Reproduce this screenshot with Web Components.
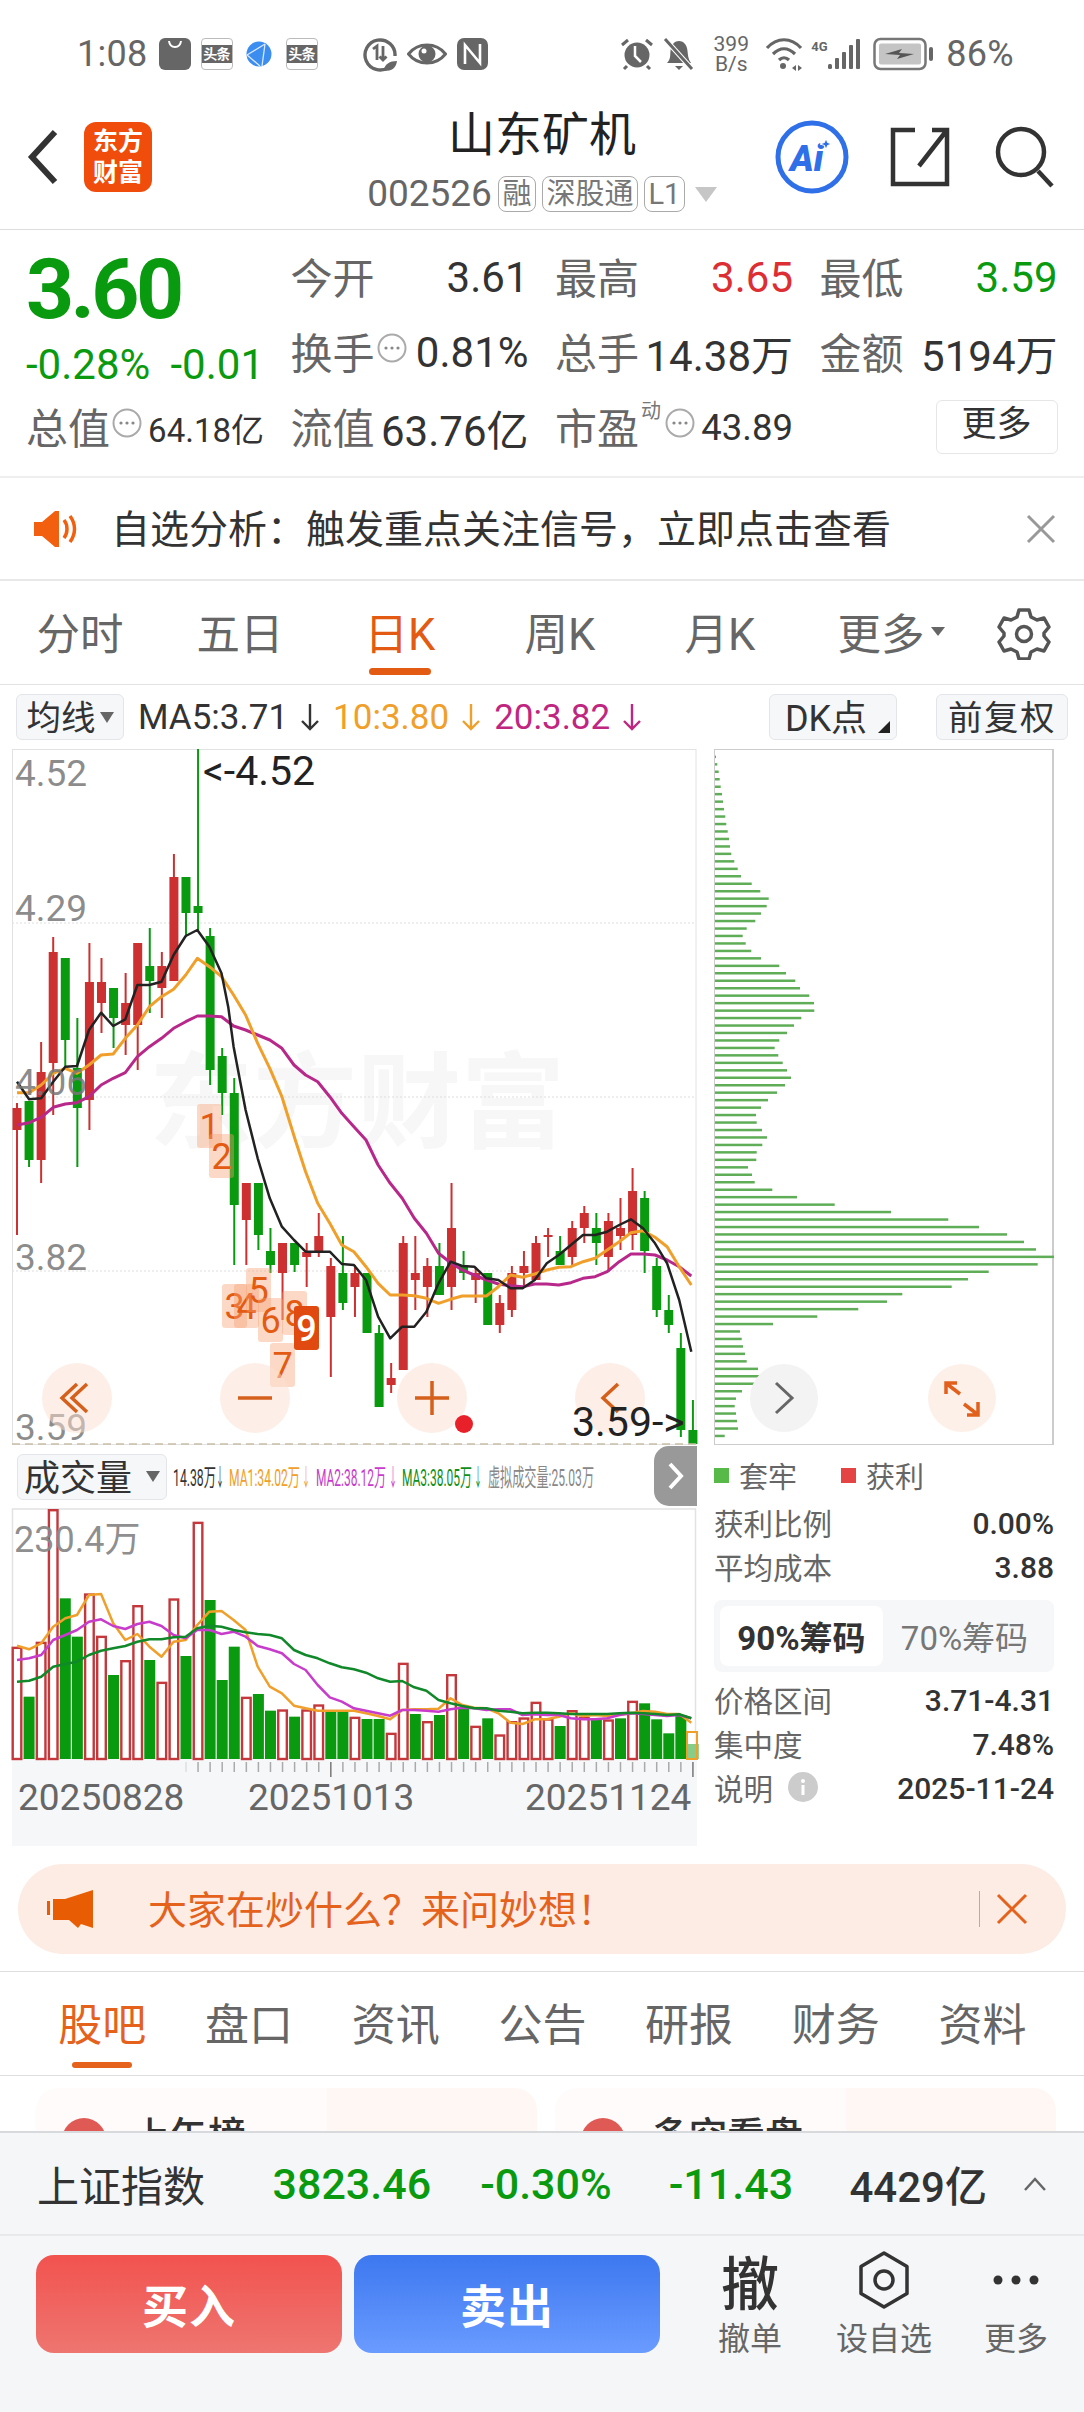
<!DOCTYPE html>
<html lang="zh-CN">
<head>
<meta charset="utf-8">
<title>山东矿机</title>
<style>
  html, body { margin: 0; background: #fff; }
  body { width: 1084px; height: 2412px; overflow: hidden; color: #333; font-family: Roboto, "Noto Sans CJK SC", sans-serif; }
  .boards { display: flex; }
</style>
</head>
<body>
<status-bar></status-bar>
<stock-header></stock-header>
<quote-panel></quote-panel>
<notice-bar></notice-bar>
<period-tabs></period-tabs>
<kline-toolbar></kline-toolbar>
<div class="boards">
  <kline-board></kline-board>
  <chip-board></chip-board>
</div>
<ask-banner></ask-banner>
<section-tabs></section-tabs>
<feed-cards></feed-cards>
<market-dock></market-dock>

<script>
const GREEN = '#0a9a10', RED = '#cc3030';
const PITCH = 12.07;
const barX = i => 17 + PITCH * i;
// readings from the two chart segments: x is in 2.23x units, y is offset from the segment top
const upper = pts => pts.map(([x, y]) => [x / 2.235, 680 + y / 3]);
const lower = pts => pts.map(([x, y]) => [x / 2.235, 1140 + y / 3]);
const vol = pts => pts.map(([x, y]) => [x / 2.235, 1440 + y / 3]);
const polyline = (pts, color, w) => `<polyline fill="none" stroke="${color}" stroke-width="${w}" stroke-linejoin="round" points="${pts.map(p => p[0].toFixed(1) + ',' + p[1].toFixed(1)).join(' ')}"/>`;
const downArrow = color => `<svg width="20" height="28" viewBox="0 0 20 28" style="flex:none"><path d="M10 1v25M2 18l8 8 8-8" fill="none" stroke="${color}" stroke-width="2.400"/></svg>`;

class StatusBar extends HTMLElement {
    connectedCallback() {
        const toutiao = `<span class="tt"><b>头条</b></span>`;
        this.attachShadow({ mode: 'open' }).innerHTML = `
        <style>
          :host { display: flex; align-items: center; height: 85px; padding: 22px 70px 0 77px; box-sizing: border-box; color: #666; }
          .time, .pct { font-size: 36px; letter-spacing: .3px; }
          svg { display: block; flex: none; }
          .tt { flex: none; width: 32px; height: 32px; box-sizing: border-box; border: 1px solid #bbb; border-radius: 4px; display: flex; align-items: center; justify-content: center; background: #fff; }
          .tt b { display: block; width: 100%; background: #666; color: #fff; font-size: 14px; line-height: 18px; text-align: center; font-weight: 700; white-space: nowrap; letter-spacing: -.5px; }
          .gap { flex: 1; }
          .rate { font-size: 21px; line-height: 20px; width: 38px; text-align: center; margin: 0 15px 0 17px; }
          .rate span { display: block; white-space: nowrap; }
          .g4 { font-size: 13px; font-weight: 700; margin: -14px 0 0 8px; width: 18px; }
        </style>
        <span class="time">1:08</span>
        <svg width="32" height="32" style="margin-left:11px"><rect width="32" height="32" rx="6" fill="#666"/><path d="M10 3c1 8 11 8 12 0" fill="none" stroke="#fff" stroke-width="2"/></svg>
        <span style="margin-left:10px;display:flex">${toutiao}</span>
        <svg width="26" height="26" viewBox="0 0 26 26" style="margin-left:13px"><circle cx="13" cy="13" r="12.5" fill="#3b8df0"/><path d="M1 14 19 3M1 14l13 11M19 3l-3 22" stroke="#dbeafe" stroke-width="1.3" fill="none"/></svg>
        <span style="margin-left:14px;display:flex">${toutiao}</span>
        <svg width="36" height="36" viewBox="0 0 36 36" style="margin-left:44px"><path d="M27 31A15 15 0 1 1 33 20" fill="none" stroke="#666" stroke-width="3.4"/><path d="M11 13l4-3v14M21 10v14m-3.500-3.500 3.500 3.500 3.500-3.500" fill="none" stroke="#666" stroke-width="2.800"/><path d="M22 35c0-7 6-10 13-10-1 7-5 10-13 10z" fill="#666"/></svg>
        <svg width="40" height="28" viewBox="0 0 40 28" style="margin-left:9px"><path d="M1.500 14C11 2 29 2 38.500 14 29 26 11 26 1.500 14z" fill="#fff" stroke="#666" stroke-width="3"/><circle cx="20" cy="14" r="8.500" fill="#666"/><circle cx="17" cy="11" r="2.500" fill="#fff"/></svg>
        <svg width="31" height="32" viewBox="0 0 31 32" style="margin-left:10px"><rect width="31" height="32" rx="7" fill="#666"/><path d="M8 26V7l15 18V6" fill="none" stroke="#fff" stroke-width="2.600"/></svg>
        <span class="gap"></span>
        <svg width="34" height="34" viewBox="0 0 34 34"><circle cx="17" cy="18" r="12.500" fill="#666"/><path d="M15 9v10l6 6" fill="none" stroke="#fff" stroke-width="2.500"/><path d="M2 8l6-5M32 8l-6-5M7 29l-3 3M27 29l3 3" stroke="#666" stroke-width="3"/></svg>
        <svg width="32" height="34" viewBox="0 0 32 34" style="margin-left:9px"><path d="M4 26c4-4 3-8 3.500-12C8 7 12 4 16 4s8 3 8.500 10c.5 4 .5 8 3.500 12z" fill="#666"/><path d="M12 29h8l-4 4z" fill="#666"/><path d="M2 2l27 30" stroke="#fff" stroke-width="5"/><path d="M2 2l27 30" stroke="#666" stroke-width="3"/></svg>
        <div class="rate"><span>399</span><span>B/s</span></div>
        <svg width="38" height="34" viewBox="0 0 38 34"><path d="M2 11c10-11 24-11 34 0M8 17c7-7 15-7 22 0M14 23c3-3 7-3 10 0" fill="none" stroke="#666" stroke-width="3.200"/><circle cx="18" cy="29" r="3" fill="#666"/><path d="M27 31l4-3v6zM37 31l-4-3v6z" fill="#666"/></svg>
        <span class="g4">4G</span>
        <svg width="34" height="32" viewBox="0 0 34 32" style="margin-left:-1px"><g fill="#666"><rect x="0" y="26" width="4" height="5" rx="1.500"/><rect x="7" y="20" width="4" height="11" rx="1"/><rect x="14" y="14" width="4" height="17" rx="1"/><rect x="21" y="7" width="4" height="24" rx="1"/><rect x="28" y="1" width="4" height="30" rx="1"/></g></svg>
        <svg width="62" height="34" viewBox="0 0 62 34" style="margin-left:11px"><rect x="1.500" y="2" width="51" height="30" rx="6" fill="#fff" stroke="#777" stroke-width="2.500"/><rect x="6" y="6.500" width="42" height="21" rx="2" fill="#c4c4c4"/><path d="M12 17l17-5-3 4 15 1-17 5 3-4z" fill="#555"/><rect x="56" y="10" width="4" height="14" rx="2" fill="#666"/></svg>
        <span class="pct" style="margin-left:11px">86%</span>`;
    }
}
customElements.define('status-bar', StatusBar);

class StockHeader extends HTMLElement {
    connectedCallback() {
        this.attachShadow({ mode: 'open' }).innerHTML = `
        <style>
          :host { display: grid; grid-template-columns: 1fr auto 1fr; align-items: center; height: 145px; box-sizing: border-box; border-bottom: 1px solid #ddd; }
          .left, .right { display: flex; align-items: center; }
          .left { padding-left: 27px; gap: 25px; }
          .right { justify-content: flex-end; padding-right: 28px; }
          .logo { width: 68px; height: 70px; border-radius: 12px; background: #f04c0c; color: #fff; font-weight: 700; font-size: 25px; line-height: 31px; text-align: center; display: flex; align-items: center; justify-content: center; }
          .mid { text-align: center; margin-left: 0; }
          .name { font-size: 47px; line-height: 60px; color: #222; padding-top: 6px; }
          .sub { display: flex; align-items: center; gap: 6px; color: #666; font-size: 37px; line-height: 42px; margin-top: 8px; }
          .tag { border: 1.500px solid #aaa; border-radius: 8px; font-size: 29px; line-height: 34px; padding: 0 3.500px; color: #777; }
          .tri { width: 0; height: 0; border: 11px solid transparent; border-top: 15px solid #c6c6c6; border-bottom: 0; margin-left: 4px; }
        </style>
        <div class="left">
          <svg width="32" height="56" viewBox="0 0 32 56"><path d="M28 3 5 28l23 25" fill="none" stroke="#333" stroke-width="6"/></svg>
          <div class="logo"><div>东方<br>财富</div></div>
        </div>
        <div class="mid">
          <div class="name">山东矿机</div>
          <div class="sub"><span>002526</span><span class="tag">融</span><span class="tag">深股通</span><span class="tag">L1</span><i class="tri"></i></div>
        </div>
        <div class="right">
          <svg width="74" height="74" viewBox="0 0 74 74"><circle cx="37" cy="37" r="34" fill="none" stroke="#2f6fe8" stroke-width="5"/><text x="15" y="51" font-family="Roboto" font-weight="900" font-style="italic" font-size="36" fill="#2f6fe8">Ai</text><path d="M51 18l1.500 4.500 4.500 1.500-4.500 1.500-1.500 4.500-1.500-4.500-4.500-1.500 4.500-1.500z" fill="#2f6fe8" stroke="#fff" stroke-width="1"/></svg>
          <svg width="62" height="62" viewBox="0 0 62 62" style="margin-left:40px"><path d="M26 4H4v54h54V30M58 30V4H43M58 4 30 40" fill="none" stroke="#333" stroke-width="4.500"/></svg>
          <svg width="62" height="62" viewBox="0 0 62 62" style="margin-left:43px"><circle cx="27" cy="26" r="23" fill="none" stroke="#333" stroke-width="4.500"/><path d="M44 45l14 15" stroke="#333" stroke-width="4.500"/></svg>
        </div>`;
    }
}
customElements.define('stock-header', StockHeader);

class QuotePanel extends HTMLElement {
    connectedCallback() {
        const dots = `<svg class="dots" width="30" height="30" viewBox="0 0 30 30"><circle cx="15" cy="15" r="13.500" fill="none" stroke="#aaa" stroke-width="2"/><circle cx="9" cy="15" r="1.600" fill="#888"/><circle cx="15" cy="15" r="1.600" fill="#888"/><circle cx="21" cy="15" r="1.600" fill="#888"/></svg>`;
        this.attachShadow({ mode: 'open' }).innerHTML = `
        <style>
          :host { display: grid; grid-template-columns: repeat(4, 238px); grid-template-rows: repeat(3, 75px); column-gap: 26.500px; height: 248px; box-sizing: border-box; padding: 10px 0 0 26px; border-bottom: 2px solid #eee; font-size: 42px; }
          .cell { display: flex; align-items: center; justify-content: space-between; white-space: nowrap; }
          .cell > span:first-child, .l { color: #666; }
          .cell > span:first-child:not(.group), .l { padding-bottom: 5px; }
          .group { display: flex; align-items: center; gap: 2px; }
          .dots { margin-top: -10px; flex: none; }
          .head { grid-row: 1 / 3; }
          .price { font-size: 84px; line-height: 84px; margin-top: 8px; font-weight: 700; color: ${GREEN}; letter-spacing: -3.600px; }
          .chg { display: flex; justify-content: space-between; margin-top: 13px; line-height: 40px; font-size: 42px; color: ${GREEN}; }
          .sm { font-size: 33px; }
          .md { font-size: 36.500px; }
          .up { color: #dc2e33; }
          .down { color: ${GREEN}; }
          sup { font-size: 20px; line-height: 1; color: #777; align-self: flex-start; margin: 6px 2px 0 0; }
          .more { margin-left: auto; width: 122px; height: 54px; box-sizing: border-box; border: 1.500px solid #e6e6e6; border-radius: 6px; font-size: 35px; line-height: 48px; text-align: center; color: #333; margin-top: -2px; }
        </style>
        <div class="head">
          <div class="price">3.60</div>
          <div class="chg"><span>-0.28%</span><span>-0.01</span></div>
        </div>
        <div class="cell"><span>今开</span><span>3.61</span></div>
        <div class="cell"><span>最高</span><span class="up">3.65</span></div>
        <div class="cell"><span>最低</span><span class="down">3.59</span></div>
        <div class="cell"><span class="group"><span class="l">换手</span>${dots}</span><span>0.81%</span></div>
        <div class="cell"><span>总手</span><span>14.38万</span></div>
        <div class="cell"><span>金额</span><span>5194万</span></div>
        <div class="cell"><span class="group"><span class="l">总值</span>${dots}</span><span class="sm">64.18亿</span></div>
        <div class="cell"><span>流值</span><span>63.76亿</span></div>
        <div class="cell"><span class="group"><span class="l">市盈</span><sup>动</sup>${dots}</span><span class="md">43.89</span></div>
        <div class="cell"><div class="more">更多</div></div>`;
    }
}
customElements.define('quote-panel', QuotePanel);

class NoticeBar extends HTMLElement {
    connectedCallback() {
        this.attachShadow({ mode: 'open' }).innerHTML = `
        <style>
          :host { display: flex; align-items: center; height: 101px; border-bottom: 2px solid #e8e8e8; padding: 0 28px 0 33px; font-size: 39px; color: #333; }
          span { flex: 1; margin-left: 32px; white-space: nowrap; padding-bottom: 6px; }
        </style>
        <svg width="46" height="38" viewBox="0 0 46 38"><path d="M1 12h8L22 1h4v36h-4L9 26H1z" fill="#f2600f"/><path d="M31 10c4 5 4 13 0 18M37 6c6 8 6 18 0 26" fill="none" stroke="#f2600f" stroke-width="3.500"/></svg>
        <span>自选分析：触发重点关注信号，立即点击查看</span>
        <svg width="30" height="30" viewBox="0 0 30 30"><path d="M2 2l26 26M28 2 2 28" stroke="#999" stroke-width="3"/></svg>`;
    }
}
customElements.define('notice-bar', NoticeBar);

class PeriodTabs extends HTMLElement {
    connectedCallback() {
        const items = ['分时', '五日', '日K', '周K', '月K'];
        this.attachShadow({ mode: 'open' }).innerHTML = `
        <style>
          :host { display: flex; height: 104px; box-sizing: border-box; border-bottom: 1.500px solid #e2e2e2; font-size: 43.500px; color: #666; }
          div { width: 160px; display: flex; align-items: center; justify-content: center; position: relative; padding-bottom: 3px; box-sizing: border-box; }
          .on { color: #e35a12; }
          .on::after { content: ''; position: absolute; left: 49px; width: 62px; bottom: 9px; height: 7px; border-radius: 4px; background: #e35a12; }
          .more { padding-left: 22px; }
          i { width: 0; height: 0; border: 7px solid transparent; border-top: 9px solid #666; border-bottom: 0; margin-left: 6px; }
          svg { margin-left: 37px; align-self: center; }
        </style>
        ${items.map((t, i) => `<div class="${i === 2 ? 'on' : ''}">${t}</div>`).join('')}
        <div class="more">更多<i></i></div>
        <svg width="54" height="54" viewBox="0 0 54 54"><path d="M22 4h10l2 7 6 3 7-2 5 9-5 6v3l5 6-5 9-7-2-6 3-2 7H22l-2-7-6-3-7 2-5-9 5-6v-3l-5-6 5-9 7 2 6-3z" fill="none" stroke="#555" stroke-width="3.500" stroke-linejoin="round"/><circle cx="27" cy="28" r="7.500" fill="none" stroke="#555" stroke-width="3.500"/></svg>`;
    }
}
customElements.define('period-tabs', PeriodTabs);

class KlineToolbar extends HTMLElement {
    connectedCallback() {
        this.attachShadow({ mode: 'open' }).innerHTML = `
        <style>
          :host { display: flex; align-items: center; height: 64px; padding: 0 16px; font-size: 35px; white-space: nowrap; }
          .btn { box-sizing: border-box; height: 46px; border: 1px solid #e3e5ea; border-radius: 6px; background: #f6f7f9; display: flex; align-items: center; justify-content: center; font-size: 34.500px; color: #333; flex: none; padding-bottom: 4px; }
          .ma { width: 108px; gap: 4px; }
          .ma i { width: 0; height: 0; border: 7px solid transparent; border-top: 11px solid #666; border-bottom: 0; margin-top: 4px; }
          .mas { display: flex; align-items: center; margin-left: 14px; flex: 1; }
          .mas svg { margin: 0 13px 0 12px; }
          .o { color: #f0a02a; }
          .m { color: #c0267f; }
          .dk { width: 128px; position: relative; padding-right: 14px; font-size: 36px; }
          .dk::after { content: ''; position: absolute; right: 6px; bottom: 6px; border: 6px solid transparent; border-right-color: #222; border-bottom-color: #222; }
          .fq { width: 132px; margin-left: 39px; letter-spacing: 1.500px; }
        </style>
        <div class="btn ma">均线<i></i></div>
        <div class="mas"><span>MA5:3.71</span>${downArrow('#333')}<span class="o">10:3.80</span>${downArrow('#f0a02a')}<span class="m">20:3.82</span>${downArrow('#c0267f')}</div>
        <div class="btn dk">DK点</div>
        <div class="btn fq">前复权</div>`;
    }
}
customElements.define('kline-toolbar', KlineToolbar);

// colour, wick top, body top, body bottom, wick bottom, in chart pixels
const CANDLES = [
    ['r',1103,1108,1130,1235],['g',1101,1101,1160,1167],['r',1042,1072,1160,1183],['r',937,952,1063,1115],
    ['g',958,958,1040,1067],['g',1018,1068,1108,1167],['r',943,982,1100,1130],['r',958,982,1003,1033],
    ['g',988,988,1018,1048],['r',973,1003,1025,1055],['r',943,943,1025,1070],['g',928,966,981,1013],
    ['r',952,966,988,1018],['r',854,877,981,981],['g',877,877,913,937],['g',749,906,913,930],
    ['g',928,936,1070,1085],['g',1048,1056,1093,1115],['g',1078,1093,1205,1265],['r',1183,1183,1220,1265],
    ['g',1183,1183,1235,1250],['g',1228,1251,1265,1273],['r',1243,1243,1273,1320],['g',1243,1243,1265,1272],
    ['r',1243,1252,1257,1287],['r',1213,1236,1251,1257],['r',1258,1266,1317,1377],['g',1236,1273,1303,1310],
    ['r',1265,1273,1287,1317],['g',1273,1273,1333,1333],['g',1325,1333,1407,1407],['r',1363,1378,1385,1393],
    ['r',1236,1243,1370,1370],['r',1236,1273,1280,1310],['r',1258,1266,1287,1317],['g',1243,1266,1295,1295],
    ['r',1183,1228,1287,1310],['g',1251,1265,1273,1280],['r',1267,1273,1280,1303],['g',1273,1273,1325,1325],
    ['r',1295,1303,1325,1333],['r',1266,1273,1310,1317],['r',1251,1266,1273,1287],['r',1236,1243,1280,1280],
    ['r',1228,1235,1237,1257],['g',1236,1251,1265,1265],['r',1221,1228,1257,1265],['r',1206,1213,1228,1243],
    ['g',1213,1228,1243,1265],['r',1213,1221,1257,1272],['r',1198,1228,1236,1250],['r',1168,1191,1235,1250],
    ['g',1191,1198,1251,1273],['g',1258,1266,1310,1317],['g',1295,1310,1325,1333],['g',1333,1348,1430,1437],
    ['g',1400,1430,1444,1444]
];
const MA5 = [...upper([[38,1205],[65,1258],[92,1255],[119,1205],[146,1160],[172,1158],[199,1050],[226,998],[253,1038],[280,1018],[307,915],[334,915],[361,905],[388,825],[415,768],[441,750],[468,800],[495,880],[510,980],[522,1100],[549,1290]]),
    ...lower([[576,55],[603,175],[630,260],[657,300],[683,335],[737,335],[764,372],[791,375],[818,420],[845,530],[872,595],[899,560],[926,560],[953,515],[980,430],[1007,365],[1033,378],[1060,380],[1087,415],[1114,420],[1141,445],[1168,445],[1195,420],[1222,370],[1249,345],[1276,315],[1303,285],[1330,285],[1357,275],[1384,255],[1410,238],[1437,265],[1464,310],[1491,370],[1518,480],[1545,635]])];
const MA10 = [...upper([[38,1238],[65,1238],[92,1215],[119,1180],[146,1165],[172,1180],[199,1155],[226,1125],[253,1122],[280,1075],[307,1035],[334,980],[361,950],[388,928],[415,885],[441,835],[468,860],[495,890],[522,945],[549,1005],[576,1090],[603,1165],[630,1250]]),
    ...lower([[660,0],[683,95],[710,190],[737,250],[764,315],[791,335],[818,380],[845,430],[872,465],[899,465],[926,467],[953,475],[980,490],[1007,478],[1033,468],[1087,468],[1114,440],[1141,405],[1168,412],[1195,402],[1222,390],[1249,382],[1276,380],[1303,365],[1330,355],[1357,330],[1384,305],[1410,278],[1437,272],[1464,292],[1491,320],[1518,380],[1545,435]])];
const MA20 = [...upper([[38,1335],[65,1328],[92,1312],[119,1282],[146,1272],[172,1268],[199,1250],[226,1215],[253,1195],[280,1178],[307,1130],[334,1100],[361,1075],[388,1045],[415,1025],[441,1008],[468,1008],[495,1010],[522,1038],[549,1050],[576,1065],[603,1080],[630,1105],[657,1155],[683,1185],[710,1205],[737,1250],[764,1300],[791,1340]]),
    ...lower([[818,0],[845,75],[872,130],[899,175],[926,235],[953,280],[980,340],[1007,368],[1033,390],[1060,405],[1087,420],[1114,432],[1141,437],[1168,440],[1195,432],[1222,432],[1249,435],[1276,428],[1303,415],[1330,410],[1357,395],[1384,365],[1410,342],[1437,342],[1464,345],[1491,360],[1518,380],[1545,408]])];
// volume bars: hollow red or solid green, with the y of the bar top
const VOLUMES = ['r620','g770','r605','r207','g475','g590','r460','r587','g705','r660','r495','g660','r725','r475','g648','r245','g480','g720','g620','r770','g762','g812','r808','g830','r808','r793','g815','g815','r830','g837','g837','r878','r668','g822','r843','g825','r702','g805','r857','g835','r883','r843','r832','r785','r835','g858','r810','r830','g835','r838','g835','r782','g790','g838','g880','g825','g912'];
const VMA1 = [[38,617],[65,628],[92,610],[119,560],[146,535],[172,525],[199,465],[226,462],[253,550],[280,600],[307,582],[334,620],[361,650],[388,605],[415,600],[441,555],[468,515],[495,513],[522,540],[549,570],[576,680],[603,740],[630,760],[657,797],[683,805],[710,812],[737,812],[791,812],[818,820],[845,828],[872,838],[899,810],[926,808],[953,808],[980,806],[1007,775],[1033,795],[1060,803],[1087,805],[1114,820],[1141,848],[1168,852],[1195,838],[1222,838],[1249,830],[1276,820],[1303,828],[1330,825],[1357,828],[1384,825],[1410,820],[1437,813],[1464,815],[1491,822],[1518,822],[1545,848]];
const VMA2 = [[38,660],[65,655],[92,645],[119,600],[146,585],[172,570],[199,545],[226,538],[253,558],[280,567],[307,552],[334,545],[361,558],[388,585],[415,595],[441,570],[468,570],[495,582],[522,575],[549,590],[576,618],[603,628],[630,640],[657,672],[683,690],[710,735],[737,772],[764,785],[791,805],[818,812],[845,820],[872,827],[899,810],[926,810],[953,812],[980,815],[1007,808],[1033,803],[1060,805],[1087,810],[1114,808],[1141,808],[1168,825],[1195,823],[1222,825],[1249,825],[1276,835],[1303,838],[1330,838],[1357,835],[1384,825],[1410,820],[1437,822],[1464,825],[1491,828],[1518,825],[1545,835]];
const VMA3 = [[38,725],[65,722],[92,710],[119,680],[146,672],[172,665],[199,645],[226,632],[253,625],[280,618],[307,605],[334,598],[361,598],[388,592],[415,590],[441,565],[468,557],[495,560],[522,570],[549,577],[576,582],[603,585],[630,595],[657,630],[683,645],[710,655],[737,670],[764,682],[791,688],[818,698],[845,715],[872,725],[899,723],[926,742],[953,752],[980,780],[1007,790],[1033,798],[1060,805],[1087,805],[1114,812],[1141,815],[1168,820],[1195,818],[1222,818],[1249,820],[1276,822],[1303,822],[1330,822],[1357,822],[1384,820],[1410,818],[1437,820],[1464,822],[1491,825],[1518,823],[1545,835]];
// DK point markers: label, left, top
const DK_POINTS = [['1',197,1104],['2',209,1134],['3',222,1284],['4',234,1284],['5',246,1268],['6',258,1298],['7',270,1343],['8',282,1291]];

class KlineBoard extends HTMLElement {
    connectedCallback() {
        this.attachShadow({ mode: 'open' }).innerHTML = `
        <style>
          :host { display: block; width: 700px; flex: none; position: relative; }
          svg { display: block; overflow: visible; }
          svg text { font-family: Roboto, "Noto Sans CJK SC", sans-serif; }
          .head { display: flex; align-items: center; height: 63px; padding-left: 17px; position: relative; }
          .btn { box-sizing: border-box; width: 150px; height: 46px; border: 1px solid #e3e5ea; border-radius: 6px; background: #f6f7f9; font-size: 36px; display: flex; align-items: center; justify-content: center; gap: 14px; color: #333; padding-bottom: 4px; }
          .btn i { width: 0; height: 0; border: 7.500px solid transparent; border-top: 11px solid #666; border-bottom: 0; margin-top: 4px; }
          .fold { position: absolute; right: 3px; top: 1px; width: 43px; height: 60px; background: #999; border-radius: 15px 0 0 15px; display: flex; align-items: center; justify-content: center; }
        </style>
        ${this.priceChart()}
        <div class="head">
          <div class="btn">成交量<i></i></div>
          ${this.legend()}
          <div class="fold"><svg width="18" height="30" viewBox="0 0 18 30"><path d="M3 3l11 12L3 27" fill="none" stroke="#fff" stroke-width="4"/></svg></div>
        </div>
        ${this.volumeChart()}`;
        // squeeze each legend text to the width its slot allows
        this.shadowRoot.querySelectorAll('.squeeze').forEach(t => {
            const sx = Number(t.dataset.w) / t.getComputedTextLength();
            t.setAttribute('transform', `translate(${t.dataset.x} 24) scale(${sx.toFixed(3)} 1)`);
        });
    }

    priceChart() {
        const bars = CANDLES.map(([c, wt, bt, bb, wb], i) => {
            const x = barX(i), col = c === 'r' ? RED : GREEN;
            return `<path d="M${x} ${wt}V${wb}" stroke="${col}" stroke-width="2"/><rect x="${x - 4.500}" y="${bt}" width="9" height="${Math.max(bb - bt, 2)}" fill="${col}"/>`;
        }).join('');
        const grid = [923, 1097, 1271].map(y => `<path d="M12 ${y}H696" stroke="#ddd" stroke-width="1" stroke-dasharray="2 2"/>`).join('');
        const axis = [['4.52',786],['4.29',921],['4.06',1095],['3.82',1270],['3.59',1440]].map(([t, y]) => `<text x="15" y="${y}" font-size="37" fill="#777" fill-opacity=".85">${t}</text>`).join('');
        const dk = DK_POINTS.map(([t, x, y]) => `<rect x="${x}" y="${y}" width="25" height="44" rx="3" fill="#f8a070" fill-opacity=".4"/><text x="${x + 12.500}" y="${y + 35}" font-size="36" fill="#e35a12" text-anchor="middle">${t}</text>`).join('');
        const round = (cx, icon) => `<circle cx="${cx}" cy="1398" r="35" fill="#fbe0d0" fill-opacity=".5"/><path d="${icon}" fill="none" stroke="#d4601c" stroke-width="3.500"/>`;
        return `<svg width="700" height="696" viewBox="0 749 700 696">
          <rect x="12.500" y="749.500" width="683.500" height="695" fill="#fff" stroke="#e2e2e2"/>
          <text x="149" y="1140" font-size="104" font-weight="700" fill="#f7f7f7">东方财富</text>
          ${grid}
          ${bars}
          ${polyline(MA20, '#b8288a', 3)}${polyline(MA10, '#f0a02a', 3)}${polyline(MA5, '#222', 2.500)}
          ${axis}
          ${dk}
          <rect x="294" y="1306" width="25" height="44" rx="3" fill="#e04a10"/><text x="306.500" y="1341" font-size="36" font-weight="500" fill="#fff" text-anchor="middle">9</text>
          ${round(77, 'M87 1384l-15 14 15 14M77 1384l-15 14 15 14')}
          ${round(255, 'M238 1398h34')}
          ${round(432, 'M415 1398h34M432 1381v34')}
          ${round(610, 'M618 1384l-15 14 15 14')}
          <circle cx="464" cy="1424" r="9" fill="#e8202a"/>
          <text x="203" y="785" font-size="41" fill="#222">&lt;-4.52</text>
          <text x="572" y="1436" font-size="41" fill="#222">3.59-&gt;</text>
          <path d="M12 1444H696" stroke="#c9bfa8" stroke-width="1.500" stroke-dasharray="8 5"/>
        </svg>`;
    }

    legend() {
        const items = [['14.38万', 2, 43, '#333'], ['↓', 45, 8, '#333'], ['MA1:34.02万', 58, 71, '#f0a02a'], ['↓', 131, 8, '#f0a02a'], ['MA2:38.12万', 145, 70, '#c83ccb'], ['↓', 218, 8, '#c83ccb'], ['MA3:38.05万', 231, 70, '#0e8f1a'], ['↓', 303, 8, '#0e8f1a'], ['虚拟成交量:25.03万', 317, 106, '#888']];
        return `<svg width="430" height="30" viewBox="0 0 430 30" style="margin-left:4px;flex:none">${items.map(([t, x, w, c]) => `<text class="squeeze" data-x="${x}" data-w="${w}" font-size="24" fill="${c}">${t}</text>`).join('')}</svg>`;
    }

    volumeChart() {
        const base = 1759;
        const bars = VOLUMES.map((v, i) => {
            const top = 1440 + Number(v.slice(1)) / 3, x = barX(i) - 5.500;
            if (v[0] === 'g') return `<rect x="${x}" y="${top}" width="11" height="${base - top}" fill="${GREEN}"/>`;
            return `<rect x="${x + 1.200}" y="${top + 1.200}" width="8.600" height="${base - top - 1.200}" fill="#fff" stroke="#c4383c" stroke-width="2.400"/>`;
        }).join('');
        let ticks = '';
        for (let i = 14; i <= 56; i++) {
            const major = i === 26 || i === 56;
            ticks += `<path d="M${barX(i)} 1762V${major ? 1777 : 1772}" stroke="${major ? '#777' : '#aaa'}" stroke-width="1.500" opacity="${i === 14 ? .3 : 1}"/>`;
        }
        const dates = [['20250828', 18], ['20251013', 248], ['20251124', 525]].map(([t, x]) => `<text x="${x}" y="1810" font-size="37" fill="#666">${t}</text>`).join('');
        return `<svg width="700" height="338" viewBox="0 1508 700 338">
          <rect x="12.500" y="1509" width="683" height="250" fill="#fff" stroke="#e2e2e2" stroke-width="1.500"/>
          <rect x="12" y="1759" width="685" height="87" fill="#f6f7f9"/>
          ${bars}
          <rect x="687" y="1732" width="10" height="27" fill="#fff" fill-opacity=".5" stroke="#f0a02a" stroke-width="2"/>
          ${polyline(vol(VMA1), '#f0a02a', 2.500)}${polyline(vol(VMA2), '#c83ccb', 2.500)}${polyline(vol(VMA3), '#11882a', 2.500)}
          <text x="14" y="1552" font-size="36" fill="#888" fill-opacity=".95">230.4万</text>
          ${ticks}${dates}
        </svg>`;
    }
}
customElements.define('kline-board', KlineBoard);

// chip distribution bars, each value is the bar's right end
const CHIPS = [78,82,86,89,92,96,99,102,106,109,113,117,120,124,133,143,153,185,211,236,230,213,196,170,158,167,184,213,268,288,316,330,358,372,373,334,312,291,268,254,265,278,291,303,285,261,234,213,198,200,216,231,217,200,199,174,186,194,247,321,434,603,775,867,951,1002,1038,1092,1043,896,834,785,637,591,505,382,249,150,155,159,165,170,204,239,216,156,138,134,138,141,144,104];

class ChipBoard extends HTMLElement {
    connectedCallback() {
        const rows = CHIPS.map((r, i) => {
            const y = 680 + (152 + i * 15) / 2.01 - 749, w = (r - 75) / 3;
            return `<rect x="1" y="${y.toFixed(1)}" width="${w.toFixed(1)}" height="2.500" fill="#5fae57"/>`;
        }).join('');
        const row = (k, v) => `<div class="row"><span>${k}</span><b>${v}</b></div>`;
        this.attachShadow({ mode: 'open' }).innerHTML = `
        <style>
          :host { display: block; width: 340px; margin-left: 14px; flex: none; font-size: 29.500px; color: #666; }
          svg { display: block; }
          .legend { display: flex; align-items: center; height: 60px; }
          .legend i { width: 15px; height: 15px; margin-right: 10px; }
          .legend span { margin-right: 44px; font-size: 29px; }
          .row { display: flex; justify-content: space-between; align-items: center; height: 44px; }
          .row span { padding-bottom: 3px; }
          b { font-weight: 500; color: #333; font-size: 30px; }
          .first { margin-top: -4px; }
          .switch { display: flex; height: 72px; box-sizing: border-box; padding: 6px; background: #f6f7f9; border-radius: 8px; margin: 11px 0 6px; }
          .switch div { display: flex; align-items: center; justify-content: center; width: 163px; font-size: 33px; border-radius: 8px; color: #777; white-space: nowrap; }
          .switch .on { background: #fff; font-weight: 700; color: #333; }
          .note { display: flex; align-items: center; gap: 15px; }
        </style>
        <svg width="340" height="696" viewBox="0 0 340 696">
          <rect x=".5" y=".5" width="338" height="695" fill="#fff" stroke="#ccc"/>
          <rect x="338" y="0" width="2" height="696" fill="#ccc"/>
          ${rows}
          <circle cx="70" cy="649" r="34" fill="#f3f3f3"/><path d="M62 634l16 15-16 15" fill="none" stroke="#666" stroke-width="3"/>
          <circle cx="248" cy="649" r="34" fill="#fdf0e8"/><path d="M232 645V634H243M233 635L246 645M264 653V666H253M263 665L250 655" fill="none" stroke="#e0601c" stroke-width="3.500"/>
        </svg>
        <div class="legend"><i style="background:#57b947"></i><span>套牢</span><i style="background:#e54444"></i><span>获利</span></div>
        <div class="first">${row('获利比例', '0.00%')}</div>
        ${row('平均成本', '3.88')}
        <div class="switch"><div class="on">90%筹码</div><div>70%筹码</div></div>
        ${row('价格区间', '3.71-4.31')}
        ${row('集中度', '7.48%')}
        <div class="row"><span class="note">说明<svg width="30" height="30" viewBox="0 0 30 30"><circle cx="15" cy="15" r="15" fill="#ccc"/><circle cx="15" cy="9" r="2" fill="#fff"/><rect x="13.500" y="13" width="3" height="10" fill="#fff"/></svg></span><b>2025-11-24</b></div>`;
    }
}
customElements.define('chip-board', ChipBoard);

class AskBanner extends HTMLElement {
    connectedCallback() {
        this.attachShadow({ mode: 'open' }).innerHTML = `
        <style>
          :host { display: flex; align-items: center; height: 90px; margin: 18px 18px 0; padding: 0 38px 0 29px; border-radius: 45px; background: #fcece4; color: #e4621c; font-size: 39px; }
          span { flex: 1; margin-left: 55px; white-space: nowrap; padding-bottom: 5px; }
          i { width: 1.500px; height: 36px; background: #d9a082; margin-right: 16px; }
        </style>
        <svg width="46" height="40" viewBox="0 0 46 40"><path d="M0 12h3v14H0zM6 10h12L46 1v38l-12-4-3 4-9-8H6z" fill="#e85d04"/></svg>
        <span>大家在炒什么？来问妙想！</span>
        <i></i>
        <svg width="32" height="32" viewBox="0 0 32 32"><path d="M2 2l28 28M30 2 2 30" stroke="#e4621c" stroke-width="3"/></svg>`;
    }
}
customElements.define('ask-banner', AskBanner);

class SectionTabs extends HTMLElement {
    connectedCallback() {
        const items = ['股吧', '盘口', '资讯', '公告', '研报', '财务', '资料'];
        this.attachShadow({ mode: 'open' }).innerHTML = `
        <style>
          :host { display: flex; height: 105px; box-sizing: border-box; margin-top: 17px; padding-left: 29px; border-top: 1.500px solid #ddd; border-bottom: 1.500px solid #ddd; font-size: 44px; color: #666; }
          div { width: 146.700px; flex: none; display: flex; align-items: center; justify-content: center; position: relative; padding-bottom: 4px; box-sizing: border-box; }
          .on { color: #e4621c; }
          .on::after { content: ''; position: absolute; left: 43px; width: 60px; bottom: 7px; height: 6px; border-radius: 3px; background: #e4621c; }
        </style>
        ${items.map((t, i) => `<div class="${i ? '' : 'on'}">${t}</div>`).join('')}`;
    }
}
customElements.define('section-tabs', SectionTabs);

class FeedCards extends HTMLElement {
    connectedCallback() {
        this.attachShadow({ mode: 'open' }).innerHTML = `
        <style>
          :host { display: flex; gap: 18px; height: 55px; padding: 12px 28px 0 36px; box-sizing: border-box; overflow: hidden; }
          .card { flex: none; width: 501px; height: 140px; border-radius: 22px; background: linear-gradient(90deg, #fffbfa 58%, #fff7f4 58%); padding: 30px 0 0 26px; box-sizing: border-box; display: flex; gap: 26px; font-size: 38px; line-height: 44px; color: #333; font-weight: 500; }
          .card span { margin-top: -4px; }
          .dot { width: 44px; height: 44px; border-radius: 50%; background: #e05a55; flex: none; }
        </style>
        <div class="card"><i class="dot"></i><span>上午榜</span></div>
        <div class="card"><i class="dot"></i><span>多空看盘</span></div>`;
    }
}
customElements.define('feed-cards', FeedCards);

class MarketDock extends HTMLElement {
    connectedCallback() {
        const action = (icon, label) => `<div class="act"><div class="ic">${icon}</div><span>${label}</span></div>`;
        this.attachShadow({ mode: 'open' }).innerHTML = `
        <style>
          :host { display: block; height: 281px; box-sizing: border-box; background: #f5f6f8; border-top: 2px solid #d8d9dc; }
          .idx { display: flex; align-items: center; height: 101px; padding: 0 37px; font-size: 42px; border-bottom: 2px solid #e8e9eb; box-sizing: content-box; white-space: nowrap; }
          .idx b { font-weight: 500; color: ${GREEN}; font-size: 43px; }
          .btns { display: flex; padding: 19px 0 0 36px; }
          .buy, .sell { width: 306px; height: 98px; border-radius: 18px; color: #fff; font-weight: 700; font-size: 46px; display: flex; align-items: center; justify-content: center; letter-spacing: 1px; padding-bottom: 2px; box-sizing: border-box; }
          .buy { background: linear-gradient(#f2534f, #ee7570); }
          .sell { background: linear-gradient(#3d78f0, #6a9bff); margin-left: 12px; }
          .acts { flex: 1; display: flex; margin: -4px 0 0 58px; }
          .act { display: flex; flex-direction: column; align-items: center; }
          .ic { height: 58px; display: flex; align-items: center; justify-content: center; font-size: 58px; font-weight: 500; color: #333; }
          .act span { font-size: 32px; line-height: 40px; color: #666; margin-top: 10px; white-space: nowrap; }
        </style>
        <div class="idx">
          <span style="width:236px">上证指数</span>
          <b style="width:208px">3823.46</b>
          <b style="width:189px">-0.30%</b>
          <b style="width:181px">-11.43</b>
          <span style="color:#333;font-weight:500;width:174px">4429亿</span>
          <svg width="24" height="14" viewBox="0 0 24 14"><path d="M2 13 12 2l10 11" fill="none" stroke="#666" stroke-width="2.500"/></svg>
        </div>
        <div class="btns">
          <div class="buy">买入</div>
          <div class="sell">卖出</div>
          <div class="acts">
            ${action('撤', '撤单')}
            <div style="width:54px"></div>
            ${action('<svg width="52" height="58" viewBox="0 0 52 58"><path d="M26 2l23 13.500v27L26 56 3 42.500v-27z" fill="none" stroke="#333" stroke-width="3.500" stroke-linejoin="round"/><circle cx="26" cy="29" r="9" fill="none" stroke="#333" stroke-width="3.500"/></svg>', '设自选')}
            <div style="width:52px"></div>
            ${action('<svg width="46" height="10" viewBox="0 0 46 10"><circle cx="5" cy="5" r="4.500" fill="#333"/><circle cx="23" cy="5" r="4.500" fill="#333"/><circle cx="41" cy="5" r="4.500" fill="#333"/></svg>', '更多')}
          </div>
        </div>`;
    }
}
customElements.define('market-dock', MarketDock);
</script>
</body>
</html>
